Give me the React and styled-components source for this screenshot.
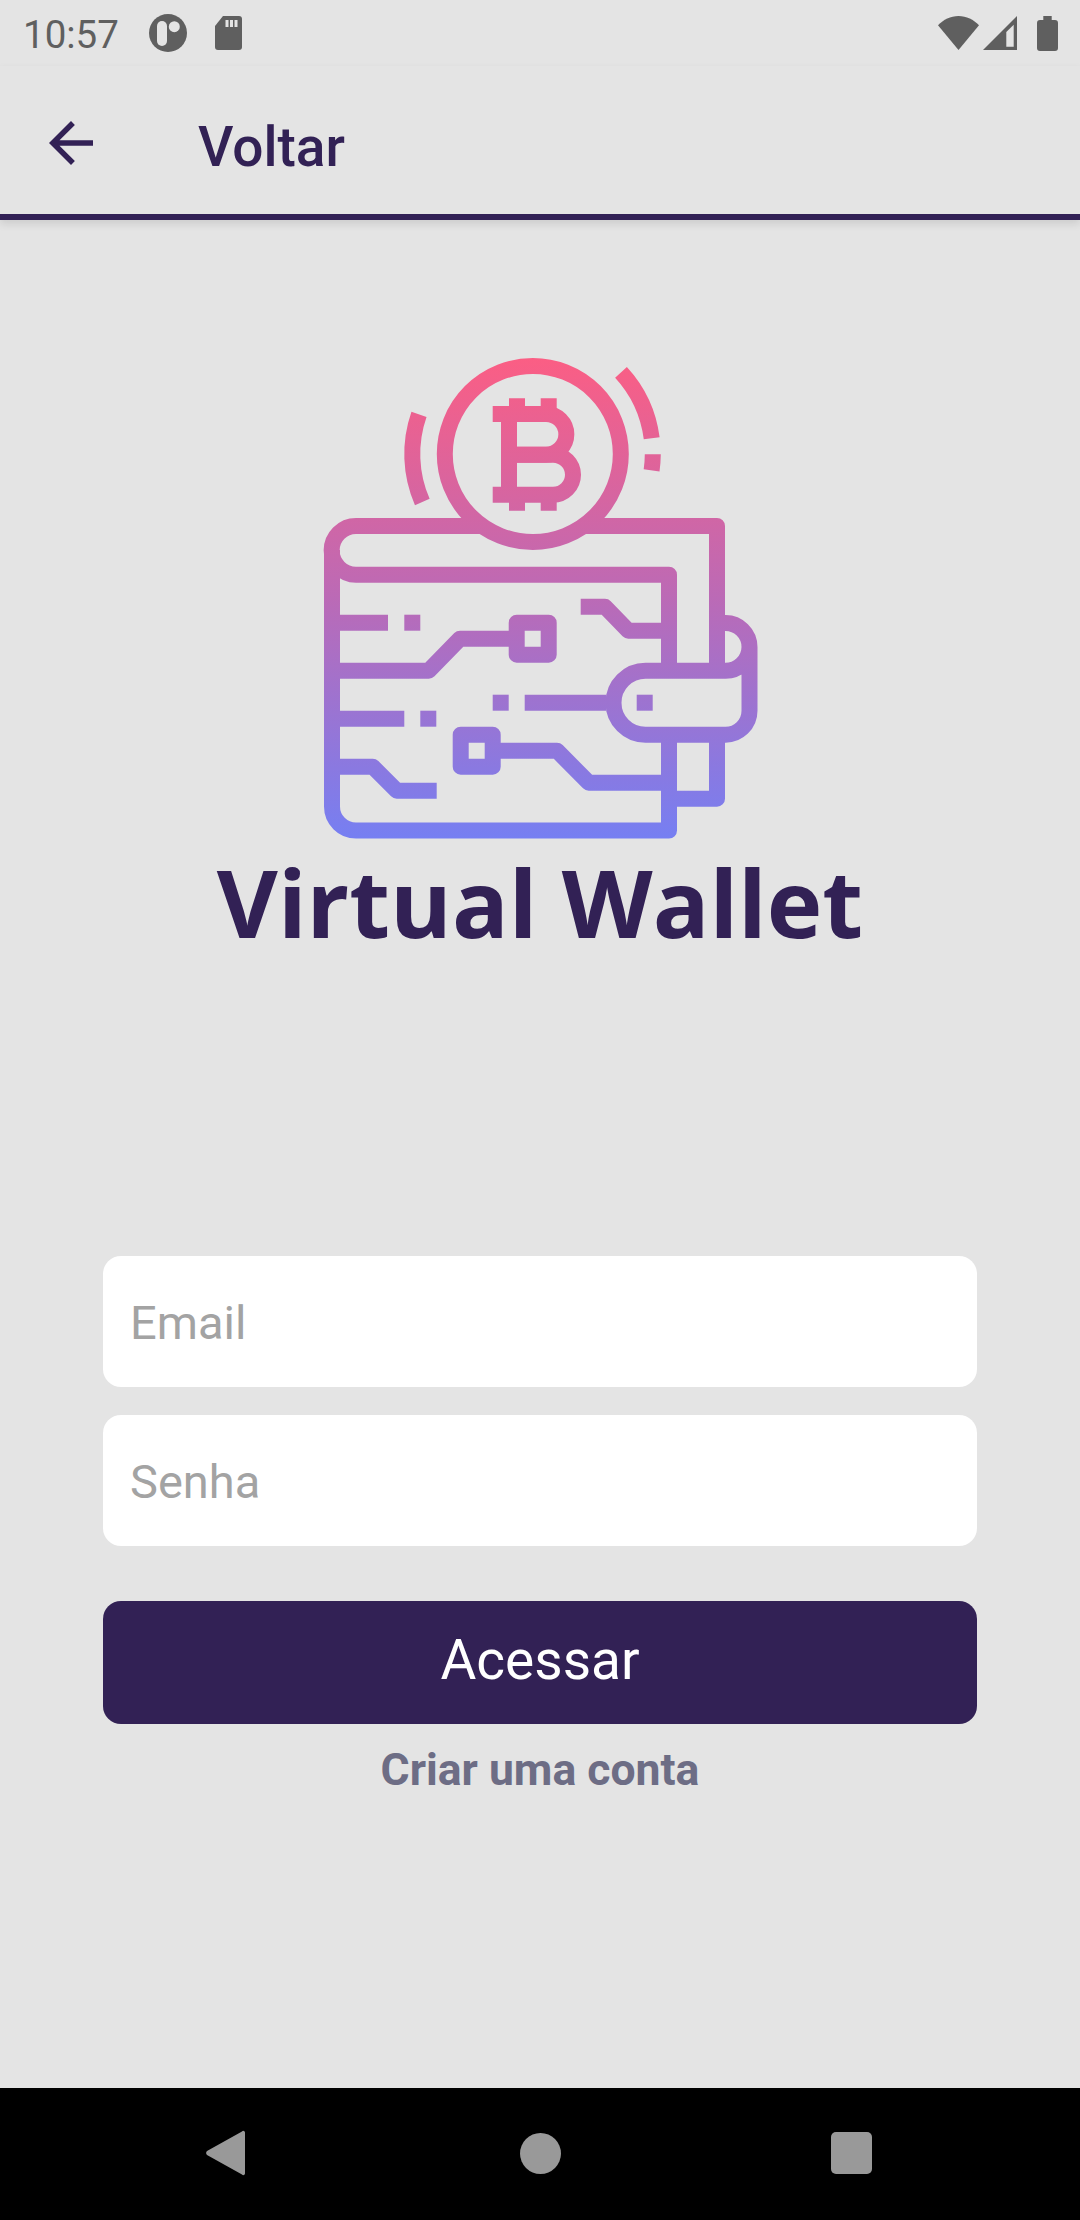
import styled, { createGlobalStyle } from "styled-components";

const purple = "#322155";

const GlobalStyle = createGlobalStyle`
  html, body {
    margin: 0;
    padding: 0;
    background: #e4e4e4;
  }
  * {
    box-sizing: border-box;
  }
`;

function App() {
  return (
    <Screen>
      <GlobalStyle />
      <StatusBar>
        <StatusLeft>
          <Clock>10:57</Clock>
          <StatusIcon width="38" height="38" viewBox="0 0 38 38">
            <circle cx="19" cy="19" r="19" fill="#5f5f5f" />
            <rect x="8" y="7" width="10" height="25" rx="5" fill="#e4e4e4" />
            <circle cx="25.300" cy="12.700" r="5.500" fill="#e4e4e4" />
          </StatusIcon>
          <StatusIcon width="27" height="34" viewBox="0 0 27 34" $left="28px">
            <path
              d="M8 0H24a3 3 0 0 1 3 3V31a3 3 0 0 1-3 3H3a3 3 0 0 1-3-3V10z"
              fill="#5f5f5f"
            />
            <path
              d="M10.500 4h3v7h-3zM15 4h3v7h-3zM19.500 4h3v7h-3z"
              fill="#e4e4e4"
            />
          </StatusIcon>
        </StatusLeft>
        <StatusRight>
          <StatusIcon width="41" height="34" viewBox="0 0 41 34">
            <path d="M20.500 34L0 9.300C5.500 3.500 12.500 0 20.500 0s15 3.500 20.500 9.300z" fill="#5f5f5f" />
          </StatusIcon>
          <StatusIcon width="34" height="34" viewBox="0 0 34 34" $left="4px">
            <path d="M34 0V34H0z" fill="#5f5f5f" />
            <path d="M30.700 8.700V30.700H23.300V16z" fill="#e4e4e4" />
          </StatusIcon>
          <StatusIcon width="21" height="35" viewBox="0 0 21 35" $left="20px">
            <path
              d="M6.300 0h8.400v4H18a3 3 0 0 1 3 3V32a3 3 0 0 1-3 3H3a3 3 0 0 1-3-3V7a3 3 0 0 1 3-3h3.300z"
              fill="#5f5f5f"
            />
          </StatusIcon>
        </StatusRight>
      </StatusBar>

      <Toolbar>
        <BackIcon viewBox="0 0 24 24">
          <path d="M20 11H7.830l5.590-5.590L12 4l-8 8 8 8 1.410-1.410L7.830 13H20v-2z" />
        </BackIcon>
        <ToolbarTitle>Voltar</ToolbarTitle>
      </Toolbar>

      <Main>
        <LogoArt viewBox="300 340 480 510">
          <defs>
            <linearGradient
              id="walletGradient"
              gradientUnits="userSpaceOnUse"
              x1="0"
              y1="358"
              x2="0"
              y2="838"
            >
              <stop offset="0" stopColor="#fb5e84" />
              <stop offset="0.5" stopColor="#bb6ab6" />
              <stop offset="1" stopColor="#767ff2" />
            </linearGradient>
          </defs>
          <g
            fill="none"
            stroke="url(#walletGradient)"
            strokeWidth="16"
            strokeLinejoin="round"
          >
            <circle cx="532.800" cy="454" r="88" />
            <path d="M419 414.300A120 120 0 0 0 422.300 502" />
            <path d="M621 372.300A120 120 0 0 1 651.700 438.300" />
            <path d="M652.800 454.300A120 120 0 0 1 651.600 470.300" />
            <path d="M492.700 414H546A20.300 20.300 0 0 1 546 454.700H509" />
            <path d="M509 414V494.700" />
            <path d="M509 454.700H553A20 20 0 0 1 553 494.700H492.700" />
            <path d="M517 398.300V414M548.700 398.300V414M517 494.700V510.700M548.700 494.700V510.700" />

            <path d="M484 526H356A24 24 0 0 0 356 574.700H669V664" />
            <path d="M332 550V806.500A24 24 0 0 0 356 830.500H669V742" />
            <path d="M581.600 526H717V664" />
            <path d="M717 742V798.700H669" />
            <path d="M717 623H725A24 24 0 0 1 749.500 647V710.700A24 24 0 0 1 725 734.700H645.500A32 32 0 0 1 645.500 670.700H725A24 24 0 0 0 749.500 647" />

            <path d="M332 622.700H388" />
            <path d="M332 670.700H428.800L460 638.700H509" />
            <rect x="516.700" y="622.700" width="32" height="32" />
            <path d="M580.700 606.700H605L628.300 630.700H669" />
            <path d="M524.700 702.700H606" />
            <path d="M332 718.700H404.300" />
            <rect x="460.700" y="734.700" width="32" height="32" />
            <path d="M500 750.700H557L588.700 782.700H669" />
            <path d="M332 766.700H372.700L396.700 790.700H436.700" />
          </g>
          <g fill="url(#walletGradient)">
            <rect x="404.300" y="614.700" width="16" height="16" />
            <rect x="492.700" y="694.700" width="16" height="16" />
            <rect x="636.700" y="694.700" width="16" height="16" />
            <rect x="420.300" y="710.700" width="16" height="16" />
          </g>
        </LogoArt>
        <Wordmark>Virtual Wallet</Wordmark>

        <Form>
          <Field placeholder="Email" />
          <Field placeholder="Senha" type="password" />
          <SubmitButton>Acessar</SubmitButton>
          <CreateLink>Criar uma conta</CreateLink>
        </Form>
      </Main>

      <NavBar>
        <NavIcon width="39" height="46" viewBox="0 0 39 46">
          <path d="M36 1.500a1.700 1.700 0 0 1 3 1V43.500a1.700 1.700 0 0 1-3 1L1 25a3 3 0 0 1 0-4z" />
        </NavIcon>
        <NavIcon width="41" height="41" viewBox="0 0 41 41">
          <circle cx="20.500" cy="20.500" r="20.500" />
        </NavIcon>
        <NavIcon width="41" height="42" viewBox="0 0 41 42">
          <rect width="41" height="42" rx="5" />
        </NavIcon>
      </NavBar>
    </Screen>
  );
}

export default App;

const Screen = styled.div`
  width: 1080px;
  height: 2220px;
  display: flex;
  flex-direction: column;
  overflow: hidden;
  background: #e4e4e4;
  font-family: Roboto, "Liberation Sans", sans-serif;
`;
const StatusBar = styled.div`
  height: 66px;
  padding: 0 22px 0 23px;
  display: flex;
  align-items: center;
  justify-content: space-between;
`;
const StatusLeft = styled.div`
  display: flex;
  align-items: center;
`;
const StatusRight = styled.div`
  display: flex;
  align-items: center;
`;
const Clock = styled.span`
  font-size: 38.500px;
  color: #5f5f5f;
  margin: 2px 30px 0 0;
`;
const StatusIcon = styled.svg`
  display: block;
  flex: none;
  margin-left: ${(props) => props.$left || "0"};
`;
const Toolbar = styled.div`
  height: 154px;
  padding: 6px 0 0 38px;
  display: flex;
  align-items: center;
  border-bottom: 6px solid ${purple};
  box-shadow: 0 4px 8px rgba(0, 0, 0, 0.1);
`;
const BackIcon = styled.svg`
  width: 66px;
  height: 66px;
  fill: ${purple};
  flex: none;
`;
const ToolbarTitle = styled.h1`
  margin: 8px 0 0 94px;
  font-size: 55px;
  font-weight: 500;
  color: ${purple};
`;
const Main = styled.main`
  flex: 1;
  display: flex;
  flex-direction: column;
  align-items: center;
  padding-top: 120px;
`;
const LogoArt = styled.svg`
  display: block;
  width: 480px;
  height: 510px;
  flex: none;
`;
const Wordmark = styled.div`
  margin-top: -3px;
  font-family: "Open Sans", sans-serif;
  font-size: 94px;
  font-weight: 700;
  line-height: 110px;
  color: ${purple};
`;
const Form = styled.form`
  width: 874px;
  margin-top: 299px;
  display: flex;
  flex-direction: column;
`;
const Field = styled.input`
  width: 100%;
  height: 131px;
  margin-bottom: 28px;
  padding: 2px 27px 0;
  border: 0;
  border-radius: 18px;
  background: #fff;
  font-family: inherit;
  font-size: 47px;
  color: #333;
  outline: none;
  &::placeholder {
    color: #a3a3a3;
    opacity: 1;
  }
`;
const SubmitButton = styled.button`
  height: 123px;
  margin-top: 27px;
  padding: 0 0 6px;
  border: 0;
  border-radius: 18px;
  background: ${purple};
  color: #fff;
  font-family: inherit;
  font-size: 55px;
`;
const CreateLink = styled.a`
  margin-top: 20px;
  text-align: center;
  font-size: 44.500px;
  font-weight: 700;
  color: #6d6d85;
`;
const NavBar = styled.nav`
  height: 132px;
  flex: none;
  background: #000;
  display: flex;
  align-items: center;
`;
const NavIcon = styled.svg`
  display: block;
  flex: none;
  fill: #999;
  margin-top: -2px;
  &:nth-child(1) {
    margin-left: 206px;
  }
  &:nth-child(2) {
    margin-left: 275px;
  }
  &:nth-child(3) {
    margin-left: 270px;
  }
`;
